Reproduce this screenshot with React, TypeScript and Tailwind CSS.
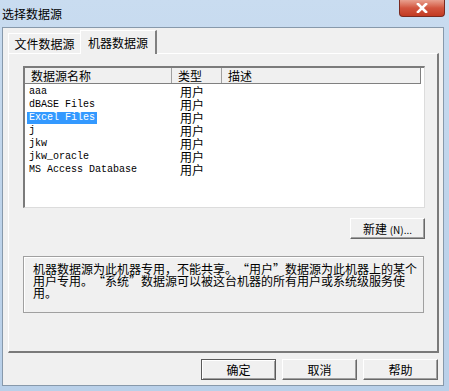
import React from "react";

const cjk = { fontFamily: '"Noto Sans CJK SC", "Noto Sans", sans-serif' };
const mono = { fontFamily: '"Liberation Mono", "Noto Sans CJK SC", monospace' };

const rows = [
  "aaa",
  "dBASE Files",
  "Excel Files",
  "j",
  "jkw",
  "jkw_oracle",
  "MS Access Database",
];

function Btn({ label, isDefault = false }: { label: React.ReactNode; isDefault?: boolean }) {
  return (
    <div
      className={
        "w-[75px] h-[21px] flex items-center justify-center bg-[#f0f0f0] text-[12px] leading-none text-black " +
        (isDefault
          ? "border border-[#5a5a5a] shadow-[inset_1px_1px_0_#ffffff,inset_-1px_-1px_0_#a0a0a0]"
          : "border-t border-l border-white border-r border-b border-r-[#696969] border-b-[#696969] shadow-[inset_-1px_-1px_0_#a0a0a0]")
      }
    >
      {label}
    </div>
  );
}

// full-width quote marks, as the dialog's font draws them
function Q({ open }: { open?: boolean }) {
  return (
    <span className={"inline-block w-[12px] " + (open ? "text-right" : "text-left")}>
      {open ? "“" : "”"}
    </span>
  );
}

export default function App() {
  return (
    <div
      className="relative w-[449px] h-[391px] overflow-hidden flex flex-col bg-gradient-to-b from-[#c9dcf0] via-[#bed4eb] to-[#b9d0e9]"
      style={cjk}
    >
      {/* title bar */}
      <div className="h-[27px] flex items-center pl-[2px] pt-[1px] text-[12px] text-black">
        选择数据源
      </div>
      <div className="absolute top-0 right-[4px] w-[46px] h-[17px] rounded-b-[4px] border border-[#7a2a20] border-t-0 bg-gradient-to-b from-[#e8a08f] via-[#d2553f] to-[#c23a22] flex items-center justify-center">
        <svg width="12" height="10" viewBox="0 0 12 10">
          <path d="M2 1 L10 9 M10 1 L2 9" stroke="#ffffff" strokeWidth="2.6" strokeLinecap="square" />
        </svg>
      </div>

      {/* client area */}
      <div className="ml-[2px] mr-[5px] mb-[5px] h-[359px] border border-[#8799ab] bg-[#f0f0f0] flex flex-col">
        {/* tabs */}
        <div className="flex items-end h-[24px] pl-[5px] mt-[1px]">
          <div className="w-[72px] h-[20px] flex items-center justify-center text-[12px] text-black border-t border-l border-white">
            文件数据源
          </div>
          <div className="w-[77px] h-[24px] flex items-center justify-center text-[12px] text-black bg-[#f0f0f0] border-t border-l border-white border-r-2 border-r-[#808080] -mb-px relative z-10">
            机器数据源
          </div>
        </div>

        {/* tab panel */}
        <div className="ml-[5px] w-[431px] h-[300px] border-t border-l border-white border-r-2 border-b-2 border-r-[#7a7a7a] border-b-[#7a7a7a] flex flex-col pl-[14px] pt-[12px]">
          {/* list view */}
          <div className="w-[402px] h-[142px] bg-white border-t-2 border-l-2 border-[#7b7b7b] border-r border-b border-r-[#dcdcdc] border-b-[#dcdcdc] flex flex-col">
            <div className="h-[16px] w-[396px] flex bg-[#f0f0f0] border-b border-[#808080] border-r border-r-[#808080] text-[12px] leading-[15px] text-black">
              <div className="w-[147px] pl-[6px] border-r border-[#a0a0a0]">数据源名称</div>
              <div className="w-[50px] pl-[6px] border-r border-[#a0a0a0]">类型</div>
              <div className="flex-1 pl-[6px]">描述</div>
            </div>
            <div className="pt-[1px] flex flex-col">
              {rows.map((r, i) => (
                <div key={r} className="h-[13px] flex items-center">
                  <div className="w-[147px] pl-[2px] h-[13px] flex items-center">
                    <span
                      className={
                        "block h-[12px] px-[2px] text-[10px] leading-[12px] " +
                        (i === 2 ? "bg-[#3399ff] text-white" : "text-black")
                      }
                      style={mono}
                    >
                      {r}
                    </span>
                  </div>
                  <div className="pl-[8px] text-[12px] leading-[13px] text-black">用户</div>
                </div>
              ))}
            </div>
          </div>

          {/* new button */}
          <div className="w-[402px] flex justify-end mt-[10px]">
            <Btn
              label={
                <span>
                  新建 <span className="text-[10px]">(N)...</span>
                </span>
              }
            />
          </div>

          {/* description */}
          <div className="mt-[17px] w-[401px] h-[57px] border border-[#a0a0a0] shadow-[inset_1px_1px_0_#ffffff] pl-[9px] pt-[6px] text-[12px] leading-[12px] text-black">
            <div className="whitespace-nowrap">
              机器数据源为此机器专用，不能共享。<Q open />用户<Q />数据源为此机器上的某个
            </div>
            <div className="whitespace-nowrap">
              用户专用。<Q open />系统<Q />数据源可以被这台机器的所有用户或系统级服务使
            </div>
            <div className="whitespace-nowrap">用。</div>
          </div>
        </div>

        {/* dialog buttons */}
        <div className="flex justify-end gap-[6px] mt-[6px] pr-[5px]">
          <Btn label="确定" isDefault />
          <Btn label="取消" />
          <Btn label="帮助" />
        </div>
      </div>
    </div>
  );
}
